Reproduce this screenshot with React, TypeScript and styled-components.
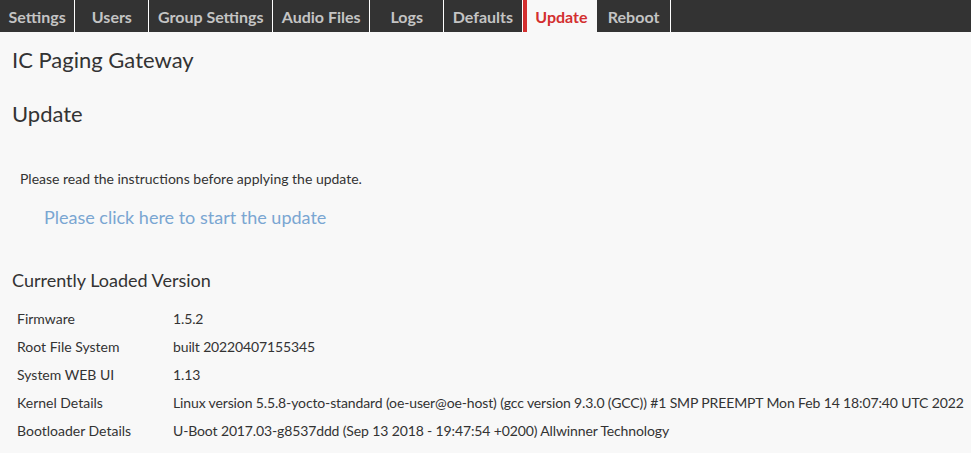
import React from "react";
import styled, { createGlobalStyle } from "styled-components";

const Global = createGlobalStyle`
  html, body { margin: 0; padding: 0; background: #f8f8f8; }
  body { font-family: Lato, "Liberation Sans", sans-serif; color: #333; }
`;

const Nav = styled.nav`
  display: flex;
  height: 32px;
  background: #333333;
`;

const Tab = styled.a<{ $active?: boolean }>`
  display: flex;
  align-items: center;
  justify-content: center;
  box-sizing: border-box;
  min-width: 74px;
  padding: 0 8.6px;
  font-size: 16px;
  font-weight: bold;
  color: ${(p) => (p.$active ? "#d32f2f" : "#c4c4c4")};
  background: ${(p) => (p.$active ? "#f8f8f8" : "transparent")};
  border-right: 1px solid ${(p) => (p.$active ? "#f8f8f8" : "#ffffff")};
  border-left: ${(p) => (p.$active ? "4px solid #d32f2f" : "none")};
  text-decoration: none;
  cursor: pointer;
`;

const Main = styled.main`
  padding: 0 12px;
`;

const Title = styled.h1`
  margin: 0;
  padding-top: 14px;
  font-size: 22px;
  font-weight: normal;
  line-height: 28px;
  color: #333;
`;

const Heading = styled.h2`
  margin: 26px 0 0;
  font-size: 22px;
  font-weight: normal;
  line-height: 28px;
  color: #333;
`;

const Note = styled.p`
  margin: 42px 0 0 8px;
  font-size: 14px;
  line-height: 18px;
`;

const StartLink = styled.a`
  display: block;
  margin: 18px 0 0 32px;
  font-size: 18px;
  line-height: 22px;
  color: #7aa6d2;
  text-decoration: none;
  cursor: pointer;
`;

const SubHeading = styled.h3`
  margin: 40px 0 0;
  font-size: 18px;
  font-weight: normal;
  line-height: 24px;
  color: #333;
`;

const Table = styled.div`
  display: grid;
  grid-template-columns: 156px auto;
  margin: 12px 0 0 5px;
  font-size: 14px;
  grid-auto-rows: 28px;
  align-items: center;
`;

const Cell = styled.div<{ $value?: boolean }>`
  white-space: nowrap;
  letter-spacing: ${(p) => (p.$value ? "-0.13px" : "0")};
`;

const tabs = [
  "Settings",
  "Users",
  "Group Settings",
  "Audio Files",
  "Logs",
  "Defaults",
  "Update",
  "Reboot",
];

const rows: [string, string][] = [
  ["Firmware", "1.5.2"],
  ["Root File System", "built 20220407155345"],
  ["System WEB UI", "1.13"],
  [
    "Kernel Details",
    "Linux version 5.5.8-yocto-standard (oe-user@oe-host) (gcc version 9.3.0 (GCC)) #1 SMP PREEMPT Mon Feb 14 18:07:40 UTC 2022",
  ],
  [
    "Bootloader Details",
    "U-Boot 2017.03-g8537ddd (Sep 13 2018 - 19:47:54 +0200) Allwinner Technology",
  ],
];

export default function App() {
  return (
    <>
      <Global />
      <Nav>
        {tabs.map((t) => (
          <Tab key={t} $active={t === "Update"}>
            {t}
          </Tab>
        ))}
      </Nav>
      <Main>
        <Title>IC Paging Gateway</Title>
        <Heading>Update</Heading>
        <Note>Please read the instructions before applying the update.</Note>
        <StartLink>Please click here to start the update</StartLink>
        <SubHeading>Currently Loaded Version</SubHeading>
        <Table>
          {rows.map(([k, v]) => (
            <React.Fragment key={k}>
              <Cell>{k}</Cell>
              <Cell $value>{v}</Cell>
            </React.Fragment>
          ))}
        </Table>
      </Main>
    </>
  );
}
